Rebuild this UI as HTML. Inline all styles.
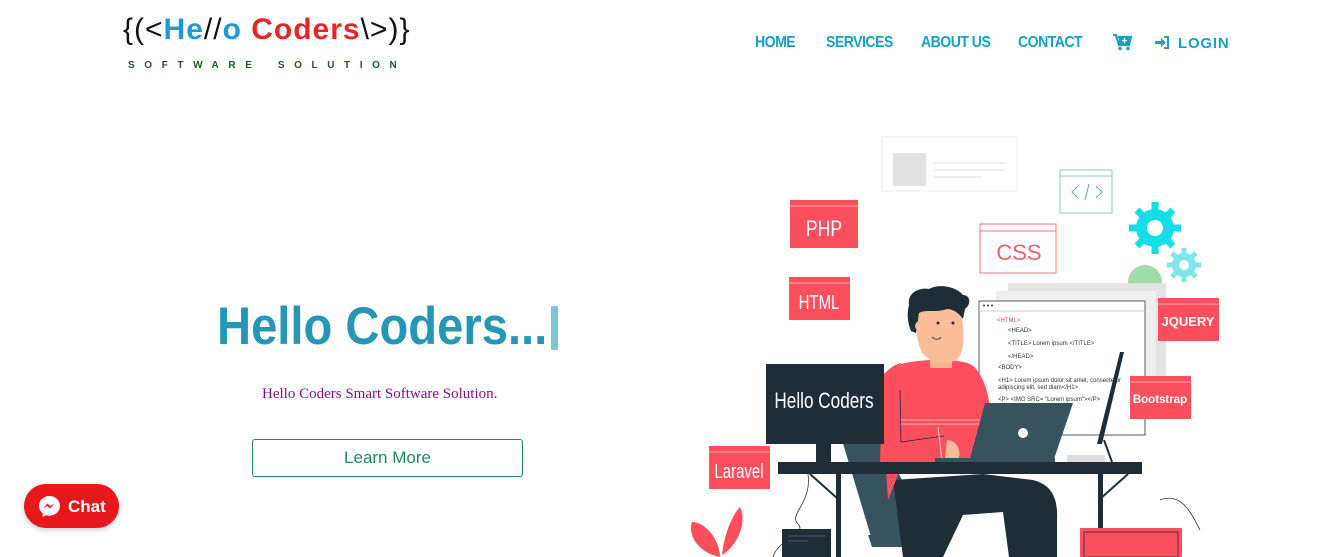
<!DOCTYPE html>
<html><head><meta charset="utf-8">
<style>
*{margin:0;padding:0;box-sizing:border-box}
body{width:1330px;height:557px;background:#fff;position:relative;overflow:hidden;font-family:"Liberation Sans",sans-serif}
.logo{position:absolute;left:123px;top:13px;font-weight:bold;font-size:30px;letter-spacing:1px;white-space:nowrap}
.logo .k{color:#111;font-weight:normal}
.logo .b{color:#1d9ad6}
.logo .r{color:#e82424}
.tag{position:absolute;left:128px;top:60px;font-size:10px;font-weight:bold;color:#1a5e1a;letter-spacing:9.6px;white-space:nowrap;word-spacing:4px}
.nav{position:absolute;top:34px;font-size:16px;font-weight:bold;color:#16a0c6;letter-spacing:-0.6px;white-space:nowrap;transform-origin:0 0;transform:scaleX(.88)}
h1{position:absolute;left:217px;top:296px;font-size:53px;font-weight:bold;color:#2596b5;white-space:nowrap;transform-origin:0 0;transform:scaleX(.89)}
.cur{position:absolute;left:551px;top:306px;width:7px;height:44px;background:#80c4d6}
.sub{position:absolute;left:262px;top:386px;font-family:"Liberation Serif",serif;font-size:15px;color:#8b0a8b;white-space:nowrap}
.btn{position:absolute;left:252px;top:439px;width:271px;height:38px;border:1px solid #1f8a5a;border-radius:3px;color:#1f8a5a;font-size:17px;text-align:center;line-height:36px}
.chat{position:absolute;left:24px;top:484px;width:95px;height:44px;border-radius:22px;background:#e8171b;color:#fff;font-weight:bold;font-size:17px;box-shadow:0 2px 6px rgba(0,0,0,.2)}
</style></head><body>
<div class="logo"><span class="k">{(&lt;</span><span class="b">He</span><span class="k">//</span><span class="b">o</span> <span class="r">Coders</span><span class="k">\&gt;)}</span></div>
<div class="tag">SOFTWARE SOLUTION</div>
<div class="nav" style="left:755px">HOME</div>
<div class="nav" style="left:826px">SERVICES</div>
<div class="nav" style="left:921px">ABOUT US</div>
<div class="nav" style="left:1018px">CONTACT</div>
<svg style="position:absolute;left:1113px;top:34px" width="19" height="17" viewBox="0 0 19 17"><path d="M0 1h3l3 10h10l2-8H5" fill="none" stroke="#16a0c6" stroke-width="2.2"/><rect x="6" y="3" width="11" height="7" fill="#16a0c6"/><circle cx="7" cy="14.5" r="1.8" fill="#16a0c6"/><circle cx="15" cy="14.5" r="1.8" fill="#16a0c6"/><path d="M11.5 4v5M9 6.5h5" stroke="#fff" stroke-width="1.3"/></svg>
<svg style="position:absolute;left:1155px;top:36px" width="15" height="13" viewBox="0 0 15 13"><path d="M0 5h6V2l5 4.5-5 4.5V8H0z" fill="#16a0c6"/><path d="M9 1h4v11H9" fill="none" stroke="#16a0c6" stroke-width="2"/></svg>
<div class="nav" style="left:1178px;letter-spacing:0.8px;font-size:15px;top:35px;transform:none">LOGIN</div>

<h1>Hello Coders...</h1><div class="cur"></div>
<div class="sub">Hello Coders Smart Software Solution.</div>
<div class="btn">Learn More</div>
<div class="chat"><svg style="position:absolute;left:14px;top:11px" width="23" height="23" viewBox="0 0 23 23"><path d="M11.5 1C5.7 1 1 5.3 1 10.8c0 3 1.4 5.6 3.7 7.4V22l3.4-1.9c1.1.3 2.2.5 3.4.5 5.8 0 10.5-4.4 10.5-9.8S17.3 1 11.5 1z" fill="#fff"/><path d="M5 13.5l4.5-5 2.5 2.5 4.5-2.5-4.5 5-2.5-2.5z" fill="#e8171b"/></svg><span style="position:absolute;left:44px;top:13px">Chat</span></div>

<svg style="position:absolute;left:0;top:0" width="1330" height="557" viewBox="0 0 1330 557" font-family="Liberation Sans, sans-serif">
<rect x="882" y="137" width="135" height="54" fill="#fff" stroke="#eee"/>
<rect x="893" y="153" width="33" height="33" fill="#e2e2e2"/>
<path d="M934 163h72M934 170h70M934 177h48" stroke="#ececec" stroke-width="1.5"/>
<rect x="1060" y="170" width="52" height="43" fill="#fff" stroke="#8fc3c8"/>
<path d="M1060 176h52" stroke="#8fc3c8"/>
<path d="M1078 186l-6 6 6 6M1096 186l6 6-6 6M1089 184l-4 16" fill="none" stroke="#5aa7b0" stroke-width="1"/>
<rect x="790" y="200" width="68" height="48" fill="#fc4f5e"/><path d="M790 206h68" stroke="#fff" stroke-width=".6"/>
<text x="824" y="236" font-size="22" fill="#fff" text-anchor="middle" transform="translate(824 0) scale(.8 1) translate(-824 0)">PHP</text>
<rect x="980" y="224" width="76" height="49" fill="#fff" stroke="#fc6f7a"/><path d="M980 231h76" stroke="#fc6f7a"/>
<text x="1019" y="260" font-size="22" fill="#fc5a68" text-anchor="middle">CSS</text>
<rect x="789" y="277" width="61" height="43" fill="#fc4f5e"/><path d="M789 283h61" stroke="#fff" stroke-width=".6"/>
<text x="819" y="309" font-size="20" fill="#fff" text-anchor="middle" transform="translate(819 0) scale(.75 1) translate(-819 0)">HTML</text>
<circle cx="1145" cy="282" r="17" fill="#9fdca8"/>
<g fill="#12e0e6"><circle cx="1155" cy="228" r="19"/><g stroke="#12e0e6" stroke-width="7"><path d="M1155 202v52M1129 228h52M1137 210l36 36M1173 210l-36 36"/></g></g>
<circle cx="1155" cy="228" r="8" fill="#fff"/>
<g fill="#7de6ea"><circle cx="1184" cy="265" r="12"/><g stroke="#7de6ea" stroke-width="5"><path d="M1184 248v34M1167 265h34M1172 253l24 24M1196 253l-24 24"/></g></g>
<circle cx="1184" cy="265" r="5" fill="#fff"/>
<rect x="1008" y="283" width="158" height="100" fill="#e4e4e4"/>
<rect x="996" y="291" width="160" height="100" fill="#eeeeee"/>
<rect x="979" y="301" width="166" height="134" fill="#fff" stroke="#556"/>
<path d="M979 311h166" stroke="#ccc"/>
<circle cx="984" cy="305.5" r="1" fill="#333"/><circle cx="988" cy="305.5" r="1" fill="#333"/><circle cx="992" cy="305.5" r="1" fill="#333"/>
<g font-size="6" fill="#333"><text x="997" y="322" fill="#f04050">&lt;HTML&gt;</text><text x="1008" y="332">&lt;HEAD&gt;</text><text x="1008" y="345">&lt;TITLE&gt; Lorem ipsum &lt;/TITLE&gt;</text><text x="1008" y="358">&lt;/HEAD&gt;</text><text x="998" y="369">&lt;BODY&gt;</text><text x="998" y="382">&lt;H1&gt; Lorem ipsum dolor sit amet, consectetur</text><text x="998" y="389">adipiscing elit, sed diam&lt;/H1&gt;</text><text x="998" y="401">&lt;P&gt; &lt;IMG SRC= "Lorem ipsum"&gt;&lt;/P&gt;</text></g>
<rect x="1158" y="298" width="61" height="43" fill="#fc4f5e"/><path d="M1158 304h61" stroke="#fff" stroke-width=".6"/>
<text x="1188" y="326" font-size="13" font-weight="bold" fill="#fff" text-anchor="middle">JQUERY</text>
<rect x="1130" y="376" width="61" height="43" fill="#fc4f5e"/><path d="M1130 382h61" stroke="#fff" stroke-width=".6"/>
<text x="1160" y="403" font-size="11.5" font-weight="bold" fill="#fff" text-anchor="middle">Bootstrap</text>
<path d="M1120 352l4 0-22 92-5 0z" fill="#1e2d36"/>
<path d="M1104 440l8 22" stroke="#1e2d36" stroke-width="2"/>
<rect x="1067" y="455" width="38" height="7" fill="#ddd"/>
<path d="M842 440l40 0 50 100h-60z" fill="#37535e"/>
<path d="M868 535h70l4 12h-70z" fill="#37535e"/>
<path d="M893 480l90-6 50 6c20 5 25 20 24 40v37h-48l-6-45-40 3-20 42h-40z" fill="#1e2d36"/>
<path d="M897 365c20-6 60-8 75 0 10 8 20 30 18 60l-10 40-80 5-12 30-6-90c0-20 5-40 15-45z" fill="#fc4f5e"/>
<path d="M883 375c5-5 10-10 18-12l-3 100-18 0z" fill="#fc4f5e"/>
<path d="M900 420h80M900 424h80" stroke="#ffc8cc" stroke-width=".8"/>
<path d="M900 390l1 52 43-6" fill="none" stroke="#1e2d36" stroke-width=".8"/>
<path d="M938 427l4 34" stroke="#ffd0d0" stroke-width="1"/>
<rect x="930" y="340" width="22" height="28" fill="#f9b48f"/>
<path d="M916 305c4-10 40-12 44 2 4 20 6 40-2 52-10 6-25 6-36-6-6-14-8-35-6-48z" fill="#fbbd98"/>
<path d="M909 305c-2-12 10-18 20-16 10-6 28-2 34 6 8 0 8 10 2 14l-2 10c-4-6-10-10-16-10-10 4-22 0-28 4l-3 20-5-2c-4-10-4-18-2-26z" fill="#1e2d36"/>
<circle cx="920" cy="326" r="5" fill="#fbbd98"/>
<circle cx="938" cy="323" r="1.5" fill="#1e2d36"/><circle cx="953" cy="323" r="1.5" fill="#1e2d36"/>
<path d="M932 337c3 3 7 3 9 0" fill="none" stroke="#1e2d36" stroke-width=".8"/>
<path d="M985 403h88l-20 59h-84z" fill="#37535e"/>
<rect x="935" y="458" width="120" height="5" fill="#37535e"/>
<circle cx="1023" cy="433" r="5" fill="#fff"/>
<path d="M947 440c8 0 14 8 12 18h-14z" fill="#fbbd98"/>
<rect x="766" y="364" width="118" height="80" fill="#1e2d36"/>
<text x="824" y="408" font-size="22" fill="#fff" text-anchor="middle" transform="translate(824 0) scale(.78 1) translate(-824 0)">Hello Coders</text>
<rect x="816" y="444" width="15" height="18" fill="#1e2d36"/>
<rect x="778" y="462" width="364" height="12" fill="#1e2d36"/>
<rect x="836" y="474" width="5" height="83" fill="#1e2d36"/>
<rect x="1098" y="474" width="5" height="83" fill="#1e2d36"/>
<path d="M810 474l28 25M1128 474l-28 25" stroke="#1e2d36" stroke-width="2"/>
<rect x="709" y="446" width="61" height="43" fill="#fc4f5e"/><path d="M709 452h61" stroke="#fff" stroke-width=".6"/>
<text x="739" y="478" font-size="20" fill="#fff" text-anchor="middle" transform="translate(739 0) scale(.75 1) translate(-739 0)">Laravel</text>
<path d="M808 474c4 30-20 40-10 50 10 10-20 15-25 33M1160 500c20-8 30 10 40 30" fill="none" stroke="#333" stroke-width=".8"/>
<rect x="782" y="529" width="49" height="28" fill="#1e2d36"/>
<path d="M788 536h37M788 541h20" stroke="#556" stroke-width="1"/>
<rect x="1080" y="528" width="102" height="29" fill="#fc4f5e"/>
<rect x="1084" y="532" width="94" height="25" fill="none" stroke="#1e2d36" stroke-width=".8"/>
<path d="M720 557c-25-5-32-25-28-35 15 0 28 20 28 35z" fill="#fc4f5e"/>
<path d="M722 555c2-20 10-40 18-48 6 10 2 35-18 48z" fill="#fc4f5e"/>
</svg>
</body></html>
